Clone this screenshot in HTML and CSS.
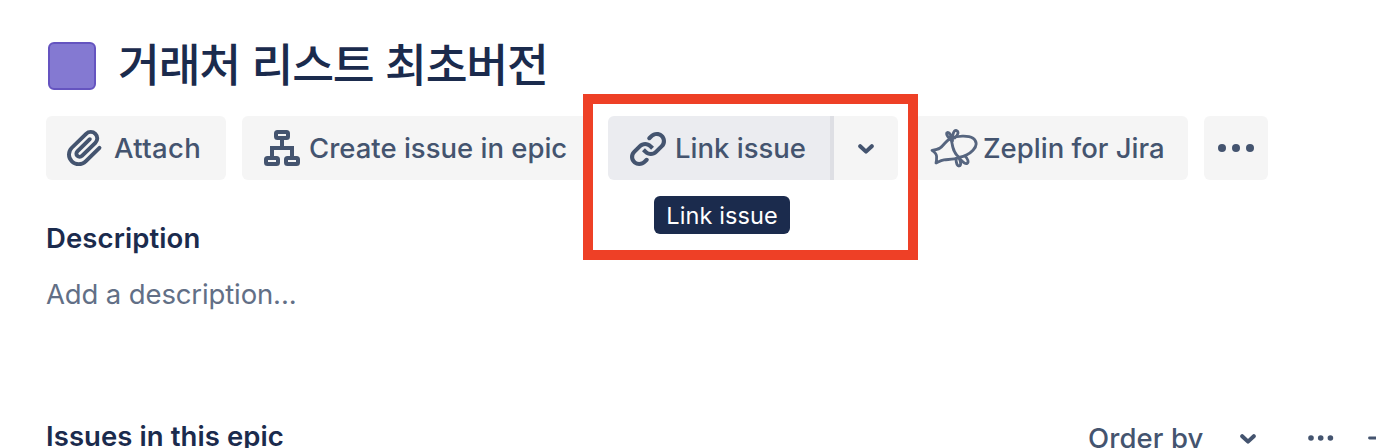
FILE: index.html
```html
<!DOCTYPE html>
<html lang="ko">
<head>
<meta charset="utf-8">
<title>거래처 리스트 최초버전</title>
<link rel="stylesheet" href="styles.css">
</head>
<body>
<main class="issue">
  <header class="issue-header">
    <span class="epic-color"></span>
    <h1 class="issue-title">거래처 리스트 최초버전</h1>
  </header>

  <div class="toolbar">
    <button class="btn btn-attach">
      <svg class="icon" viewBox="0 0 24 24"><path fill="currentColor" d="M11.643 17.965c-1.53 1.495-4.016 1.496-5.542.004a3.773 3.773 0 01.002-5.412l7.147-6.985a2.316 2.316 0 013.233-.003c.893.873.895 2.282.004 3.153l-6.703 6.55a.653.653 0 01-.914-.008.62.62 0 010-.902l6.229-6.087a.941.941 0 000-1.353.995.995 0 00-1.384 0l-6.23 6.087a2.502 2.502 0 000 3.607 2.643 2.643 0 003.683.009l6.703-6.55a4.074 4.074 0 00-.003-5.859 4.306 4.306 0 00-6.002.003l-7.148 6.985a5.655 5.655 0 00-.001 8.118c2.29 2.24 6.017 2.24 8.31-.001l6.91-6.754a.94.94 0 000-1.353.995.995 0 00-1.384 0l-6.91 6.754z"/></svg>
      <span class="label label-attach">Attach</span>
    </button>
    <button class="btn btn-create">
      <svg class="icon" viewBox="0 0 48 48" fill="none" stroke="currentColor" stroke-width="4"><rect x="18" y="8" width="12" height="6" rx="1.5"/><rect x="8" y="34" width="12" height="6" rx="1.5"/><rect x="28" y="34" width="12" height="6" rx="1.5"/><path d="M24 16v8M14 33v-9h20v9"/></svg>
      <span class="label label-create">Create issue in epic</span>
    </button>
    <div class="split">
      <button class="btn btn-link">
        <svg class="icon" viewBox="0 0 24 24"><path fill="currentColor" d="M12.856 5.457l-.937.92a1.002 1.002 0 000 1.437 1.047 1.047 0 001.463 0l.984-.966c.967-.95 2.542-1.135 3.602-.288a2.54 2.54 0 01.203 3.81l-2.903 2.852a2.646 2.646 0 01-3.696 0l-1.11-1.09L9 13.57l1.108 1.089c1.822 1.788 4.802 1.788 6.622 0l2.905-2.852a4.558 4.558 0 00-.357-6.82c-1.893-1.517-4.695-1.226-6.422.47M11.144 19.543l.937-.92a1.002 1.002 0 000-1.437 1.047 1.047 0 00-1.462 0l-.985.966c-.967.95-2.542 1.135-3.602.288a2.54 2.54 0 01-.203-3.81l2.903-2.852a2.646 2.646 0 013.696 0l1.11 1.09L15 11.43l-1.108-1.089c-1.822-1.788-4.802-1.788-6.622 0l-2.905 2.852a4.558 4.558 0 00.357 6.82c1.893 1.517 4.695 1.226 6.422-.47"/></svg>
        <span class="label label-link">Link issue</span>
      </button>
      <button class="btn btn-caret">
        <svg class="caret" viewBox="0 0 16 10"><path d="M2.2 2.2L8 7.6l5.8-5.4"/></svg>
      </button>
      <span class="tooltip">Link issue</span>
      <span class="highlight"></span>
    </div>
    <button class="btn btn-zeplin">
      <svg class="zeplin" viewBox="0 0 48 40"><path d="M21 10.3C27 7.8 38 7 43 10.2C47.5 13.5 47 18 43 22.3C39.5 26 35 28.3 29 29.3M21 10.3C16 12 14 17.5 10 20C8 21.4 5 22 2 22.3C5 24.3 6.6 26 6.6 28.5C6.7 31 6.5 33 6 35C9 33.5 11 32.2 14 31.8C19 31.2 24 32 29 29.3M21 10.3C22.5 16 22 24 29 29.3"/><path d="M22.5 13C19 10.5 15.5 6.5 17 4.8C19 3.3 21.8 8 22.5 13C22 8 23.5 2.3 26 2.3C29.3 3 28.5 7.5 24 10.5M26 30C26 34 27 38 29 38C31.5 37.5 31 33.500 28.500 29.300C31 32 34.500 36.500 37 35.500C39.300 34 37.500 30.500 35 28"/></svg>
      <span class="label label-zeplin">Zeplin for Jira</span>
    </button>
    <button class="btn btn-more">
      <svg class="more" viewBox="0 0 36 8" fill="currentColor"><circle cx="4" cy="4" r="4"/><circle cx="18" cy="4" r="4"/><circle cx="32" cy="4" r="4"/></svg>
    </button>
  </div>

  <h2 class="section-title description-title">Description</h2>
  <p class="placeholder">Add a description...</p>

  <div class="children-header">
    <h2 class="section-title children-title">Issues in this epic</h2>
    <div class="children-actions">
      <span class="order-by">Order by</span>
      <svg class="caret caret-order" viewBox="0 0 16 10"><path d="M2.2 2.2L8 7.6l5.8-5.4"/></svg>
      <svg class="more-small" viewBox="0 0 26 6" fill="currentColor"><circle cx="3" cy="3" r="2.8"/><circle cx="12.7" cy="3" r="2.8"/><circle cx="22.4" cy="3" r="2.8"/></svg>
      <svg class="plus" viewBox="0 0 24 24"><path d="M1.500 12h21M12 1.500v21"/></svg>
    </div>
  </div>
</main>
</body>
</html>
```

FILE: styles.css
```css
* { box-sizing: border-box; }

body {
  margin: 0;
  height: 448px;
  overflow: hidden;
  background: #fff;
  color: #1b2b4d;
  font-family: Inter, "Noto Sans CJK KR", sans-serif;
}

.issue { padding: 42px 0 0 46px; height: 448px; overflow: hidden; }

.issue-header {
  display: flex;
  align-items: center;
  gap: 22px;
  height: 48px;
  padding-left: 2px;
}

.epic-color {
  width: 48px;
  height: 48px;
  border: 2px solid #6554c0;
  border-radius: 6px;
  background: #8479d2;
}

.issue-title {
  margin: 0;
  padding-bottom: 9px;
  font: 500 45.5px/60px "Noto Sans CJK KR", sans-serif;
  letter-spacing: -1.2px;
  white-space: nowrap;
}

.toolbar { display: flex; gap: 16px; margin-top: 26px; height: 64px; }

.btn {
  display: flex;
  align-items: center;
  flex: none;
  height: 64px;
  margin: 0;
  padding: 0;
  border: 0;
  border-radius: 6px;
  background: #f5f5f5;
  color: #44546f;
  font: 500 27.5px/40px Inter, sans-serif;
  white-space: nowrap;
}

.btn-attach { width: 180px; padding-left: 15px; }
.btn-create { width: 350px; padding-left: 16px; }
.btn-link {
  width: 226px;
  padding-left: 16px;
  border-right: 4px solid #dedfe4;
  border-radius: 6px 0 0 6px;
  background: #ebecf0;
}
.btn-caret { width: 64px; justify-content: center; border-radius: 0 6px 6px 0; }
.btn-caret .caret { margin-top: 2px; }
.btn-zeplin { width: 274px; padding-left: 16px; }
.btn-more { width: 64px; justify-content: center; }

.icon { flex: none; width: 48px; height: 48px; }
.label { margin-left: 5px; }
.label-attach { letter-spacing: 0.35px; }
.label-create { margin-left: 3px; }
.label-link { margin-left: 3px; }

.caret { flex: none; width: 16px; height: 10px; }
.caret path {
  fill: none;
  stroke: #44546f;
  stroke-width: 4;
  stroke-linecap: round;
  stroke-linejoin: round;
}
.more { width: 36px; height: 8px; }
.zeplin {
  flex: none;
  width: 48px;
  height: 40px;
  fill: none;
  stroke: #56657f;
  stroke-width: 2.8;
  stroke-linejoin: round;
}

.split { position: relative; display: flex; }

.tooltip {
  position: absolute;
  top: 80px;
  left: 46px;
  width: 136px;
  height: 38px;
  border-radius: 6px;
  background: #1b2b4d;
  color: #fff;
  font-size: 23.5px;
  line-height: 39px;
  letter-spacing: 0.1px;
  text-align: center;
  white-space: nowrap;
}

.highlight {
  position: absolute;
  z-index: 1;
  top: -22px;
  left: -25px;
  width: 335px;
  height: 166px;
  border: 10px solid #ee4026;
  pointer-events: none;
}

.section-title { margin: 0; font-weight: 600; font-size: 27.5px; line-height: 40px; }
.description-title { margin-top: 38px; letter-spacing: 0.1px; }

.placeholder {
  margin: 16px 0 0;
  color: #626f86;
  font-size: 27.5px;
  line-height: 40px;
  letter-spacing: -0.13px;
}

.children-header {
  display: flex;
  justify-content: space-between;
  margin-top: 102px;
  height: 40px;
}
.children-title { letter-spacing: 0.08px; }

.children-actions {
  display: flex;
  flex: none;
  align-items: center;
  width: 288px;
  height: 44px;
  color: #44546f;
}
.order-by {
  flex: none;
  width: 152px;
  font-weight: 500;
  font-size: 27.5px;
  line-height: 40px;
  letter-spacing: 0.1px;
}
.caret-order { margin-top: 2px; }
.more-small { flex: none; width: 26px; height: 6px; margin-left: 52px; }
.plus { flex: none; width: 24px; height: 24px; margin-left: 34px; }
.plus path { fill: none; stroke: #44546f; stroke-width: 2.8; stroke-linecap: round; }
```
